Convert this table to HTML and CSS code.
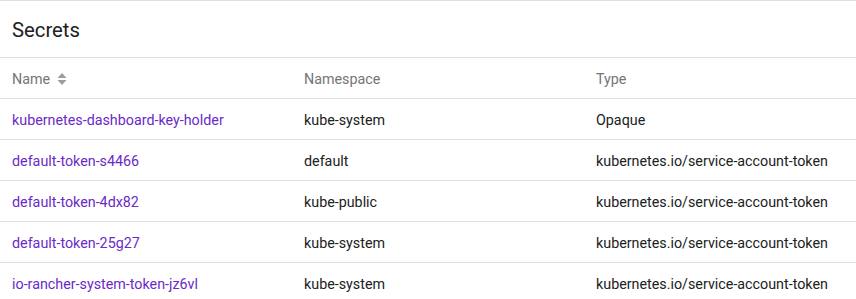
FILE: index.html
```html
<!DOCTYPE html>
<html>
<head>
<meta charset="utf-8">
<link rel="stylesheet" href="styles.css">
</head>
<body>
<div class="card">
  <div class="title">Secrets</div>
  <div class="table">
    <div class="row head">
      <div class="cell">Name <svg class="sort" width="10" height="14" viewBox="0 0 10 14"><path d="M5 1 L9.5 6 H0.5 Z" fill="#9e9e9e"/><path d="M5 13 L9.5 8 H0.5 Z" fill="#9e9e9e"/></svg></div>
      <div class="cell">Namespace</div>
      <div class="cell">Type</div>
    </div>
    <div class="row">
      <div class="cell"><a class="link">kubernetes-dashboard-key-holder</a></div>
      <div class="cell">kube-system</div>
      <div class="cell">Opaque</div>
    </div>
    <div class="row">
      <div class="cell"><a class="link">default-token-s4466</a></div>
      <div class="cell">default</div>
      <div class="cell">kubernetes.io/service-account-token</div>
    </div>
    <div class="row">
      <div class="cell"><a class="link">default-token-4dx82</a></div>
      <div class="cell">kube-public</div>
      <div class="cell">kubernetes.io/service-account-token</div>
    </div>
    <div class="row">
      <div class="cell"><a class="link">default-token-25g27</a></div>
      <div class="cell">kube-system</div>
      <div class="cell">kubernetes.io/service-account-token</div>
    </div>
    <div class="row">
      <div class="cell"><a class="link">io-rancher-system-token-jz6vl</a></div>
      <div class="cell">kube-system</div>
      <div class="cell">kubernetes.io/service-account-token</div>
    </div>
  </div>
</div>
</body>
</html>
```

FILE: styles.css
```css
html, body {
  margin: 0;
  padding: 0;
  background: #ffffff;
}
body {
  font-family: Roboto, "Liberation Sans", sans-serif;
  color: #212121;
}
.card {
  border-top: 1px solid #e0e0e0;
  background: #fff;
}
.title {
  height: 57px;
  box-sizing: border-box;
  padding: 2px 12px 0 12px;
  display: flex;
  align-items: center;
  font-size: 20.3px;
  color: #212121;
  border-bottom: 1px solid #e0e0e0;
}
.row {
  display: grid;
  grid-template-columns: 292px 292px 1fr;
  height: 41px;
  box-sizing: border-box;
  border-bottom: 1px solid #e0e0e0;
  align-items: center;
  font-size: 14.3px;
}
.cell {
  padding: 2px 12px 0 12px;
  white-space: nowrap;
  display: flex;
  align-items: center;
}
.head {
  color: #757575;
}
.sort {
  margin-left: 7px;
}
.link {
  color: #6a2ac9;
  text-decoration: none;
}
```
